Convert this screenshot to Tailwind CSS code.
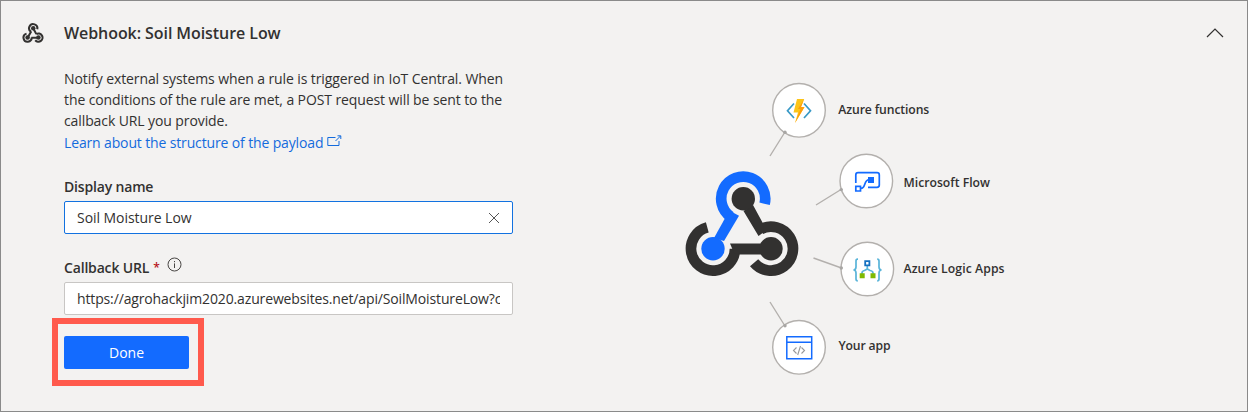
<!DOCTYPE html>
<html lang="en">
<head>
<meta charset="utf-8">
<title>Webhook: Soil Moisture Low</title>
<script src="https://cdn.jsdelivr.net/npm/@tailwindcss/browser@4"></script>
</head>
<body class="h-[412px] w-[1248px] overflow-hidden bg-[#f3f2f1] font-['Open_Sans','Noto_Sans',sans-serif] text-[#323130]">
<main class="flex h-[412px] w-[1248px] flex-col border border-[#8a8a8a]">
  <header class="flex h-[62px] shrink-0 items-center pl-[21px] pr-[23px]">
    <svg class="mt-[2px] h-[22px] w-[22px] shrink-0" viewBox="683 168 118 112" fill="none" stroke="#323130" stroke-width="11">
      <path d="M764.6 203.8A22 22 0 1 0 732.3 217.6M707.3 227.4A22 22 0 1 0 735 248.7M759.7 229.8A22 22 0 1 1 754.1 262.8"/>
      <path d="M732 216L713 249M743 198L760 230M733 249H771"/>
      <g fill="#323130" stroke="none"><circle cx="743.3" cy="198.5" r="12"/><circle cx="713" cy="248.7" r="12"/><circle cx="771" cy="248.7" r="12"/></g>
    </svg>
    <h1 class="ml-[20px] mt-[2px] grow whitespace-nowrap text-[16px] font-semibold leading-6 tracking-[-0.07px]">Webhook: Soil Moisture Low</h1>
    <svg class="mt-[1px] h-[12px] w-[18px]" viewBox="0 0 18 12" fill="none" stroke="#323130" stroke-width="1.2"><path d="M1 10L9 2L17 10"/></svg>
  </header>
  <div class="flex grow">
    <section class="ml-[63px] w-[449px] shrink-0 pt-[5px]">
      <div class="whitespace-nowrap text-[14px] leading-[21px] tracking-[-0.1px]">
        <p>Notify external systems when a rule is triggered in IoT Central. When</p>
        <p>the conditions of the rule are met, a POST request will be sent to the</p>
        <p>callback URL you provide.</p>
      </div>
      <a class="flex h-[23px] items-center whitespace-nowrap text-[14px] tracking-[-0.14px] text-[#136bdd]">Learn about the structure of the payload
        <svg class="mb-[4px] ml-[4px] h-[12px] w-[15px]" viewBox="0 0 15 12" fill="none" stroke="#136bdd"><path d="M8.5 2.5H.8V10.5H12V6M8.5 6L13.5 1M10.5.8H13.8V4"/></svg>
      </a>
      <label class="mt-[22px] block h-[21px] text-[14px] font-semibold leading-[21px] tracking-[-0.17px]">Display name</label>
      <div class="mt-[4px] flex h-[33px] items-center justify-between rounded-[2px] border border-[#1272e0] bg-white pl-[12px] pr-[12px] text-[14px]">
        <span class="tracking-[-0.05px]">Soil Moisture Low</span>
        <svg class="h-[12px] w-[12px]" viewBox="0 0 12 12" stroke="#555" stroke-width="1"><path d="M1 1L11 11M11 1L1 11"/></svg>
      </div>
      <div class="mt-[23px] flex h-[21px] items-center text-[14px] font-semibold"><span class="tracking-[-0.17px]">Callback URL</span><span class="ml-[4px] text-[12px] text-[#b8141c]">*</span>
        <svg class="mb-[7px] ml-[7px] h-[15px] w-[15px]" viewBox="0 0 15 15" fill="none" stroke="#484644"><circle cx="7.5" cy="7.5" r="6.5"/><path d="M7.5 6.4V11M7.5 4V5.2"/></svg>
      </div>
      <div class="mt-[4px] h-[33px] rounded-[2px] border border-[#c8c6c4] bg-white px-[12px]">
        <div class="overflow-hidden whitespace-nowrap text-[14px] leading-[32px] tracking-[-0.14px]">https://agrohackjim2020.azurewebsites.net/api/SoilMoistureLow?c</div>
      </div>
      <div class="-ml-[12px] mt-[3px] h-[68px] w-[152px] border-[6px] border-[#ff5a4d] pl-[6px] pt-[12px]">
        <button class="block h-[33px] w-[125px] rounded-[2px] bg-[#136bff] pb-[1px] text-[14px] text-white">Done</button>
      </div>
    </section>
    <svg class="ml-[147px] h-[330px] w-[360px] shrink-0" viewBox="660 63 360 330" fill="none">
      <g stroke="#b3b0ad" stroke-width="1.4">
        <path d="M770 156L785 132M816 205L841 189.5M813.5 258L841.5 268M770 302L785 326"/>
        <g fill="#fff"><ellipse cx="799" cy="110.3" rx="26.3" ry="26.8"/><ellipse cx="866.3" cy="181" rx="26.3" ry="26.8"/><ellipse cx="867.3" cy="269" rx="26.3" ry="26.8"/><ellipse cx="799" cy="347.3" rx="26.3" ry="26.8"/></g>
        <g fill="#a8a6a4" stroke="none"><circle cx="785" cy="132.3" r="1.7"/><circle cx="841.3" cy="189.6" r="1.7"/><circle cx="841.3" cy="268" r="1.7"/><circle cx="785" cy="325.7" r="1.7"/></g>
      </g>
      <g stroke-width="10.7">
        <path stroke="#136bff" d="M764.6 203.8A22 22 0 1 0 730.5 216.6"/>
        <path stroke="#323130" d="M707.3 227.4A22 22 0 1 0 735 248.7M760.5 229.3A22 22 0 1 1 754.1 262.8"/>
      </g>
      <path fill="#136bff" d="M725 218.3L732 212L739 215.7L724 241L714 238Z"/>
      <path fill="#323130" d="M743.5 211L753 205L762.5 222.5L764 232L758.5 236ZM730 243.4H771V254.4H739.5L734 253Z"/>
      <circle cx="713" cy="248.7" r="11.7" fill="#136bff"/>
      <circle cx="743.3" cy="198.7" r="11.7" fill="#323130"/><circle cx="771" cy="248.7" r="11.7" fill="#323130"/>
      <g stroke="#3999c6" stroke-width="1.7"><path d="M794 103.5L787.5 110.7L794 118M804 103.5L810.5 110.7L804 118"/></g>
      <path fill="#fcc419" d="M797 99H804.2L801 107H804.5L795 123L798 112.5H793.5Z"/><path fill="#ff9e0b" d="M804.2 99L801 107H804.5L795 123L800.5 109H798Z"/>
      <g stroke="#136bff" stroke-width="1.7"><path d="M855.8 183V175Q855.8 172.7 858.1 172.7H877Q879.3 172.7 879.3 175V185Q879.3 187.3 877 187.3H868"/><path d="M855.8 186.3H860.5V191H855.8ZM861 188.5C866 188.5 863.5 180 869 179.7"/><path fill="#136bff" stroke="none" d="M868 177H874V183H868Z"/></g>
      <g stroke="#59b4d9" stroke-width="1.7"><path d="M858 259.2H857.5Q856 259.2 856 261V267Q856 269.8 853.5 270Q856 270.2 856 273V279Q856 280.8 857.8 280.8M877.2 259.2Q879 259.2 879 261V267Q879 269.8 881.5 270Q879 270.2 879 273V279Q879 280.8 877.2 280.8M867.3 266V269M862 275V273Q862 271 864.5 270.5L867.3 269L870 270.5Q873 271 873 273V275"/></g>
      <path stroke="#1570c0" stroke-width="1.8" d="M865.2 261.2H869.4V265.4H865.2Z"/><path fill="#7fba00" d="M859.7 273.3H864.7V278.3H859.7ZM870.5 273.3H875.5V278.3H870.5Z"/>
      <path stroke="#136bff" stroke-width="1.5" d="M786.8 336.8H811.7V358.7H786.8ZM786.8 342.2H811.7"/>
      <path stroke="#999" stroke-width="1.1" d="M796.5 347.5L793.5 350.5L796.5 353.5M801.5 347.5L804.5 350.5L801.5 353.5M800.5 346L797.7 355"/>
      <g fill="#323130" font-size="12.2" font-weight="600">
        <text x="838.3" y="114" textLength="91">Azure functions</text>
        <text x="903.5" y="186.5" textLength="86.5">Microsoft Flow</text>
        <text x="903.5" y="273.2" textLength="101">Azure Logic Apps</text>
        <text x="838.5" y="350.2" textLength="52">Your app</text>
      </g>
    </svg>
  </div>
</main>
</body>
</html>
